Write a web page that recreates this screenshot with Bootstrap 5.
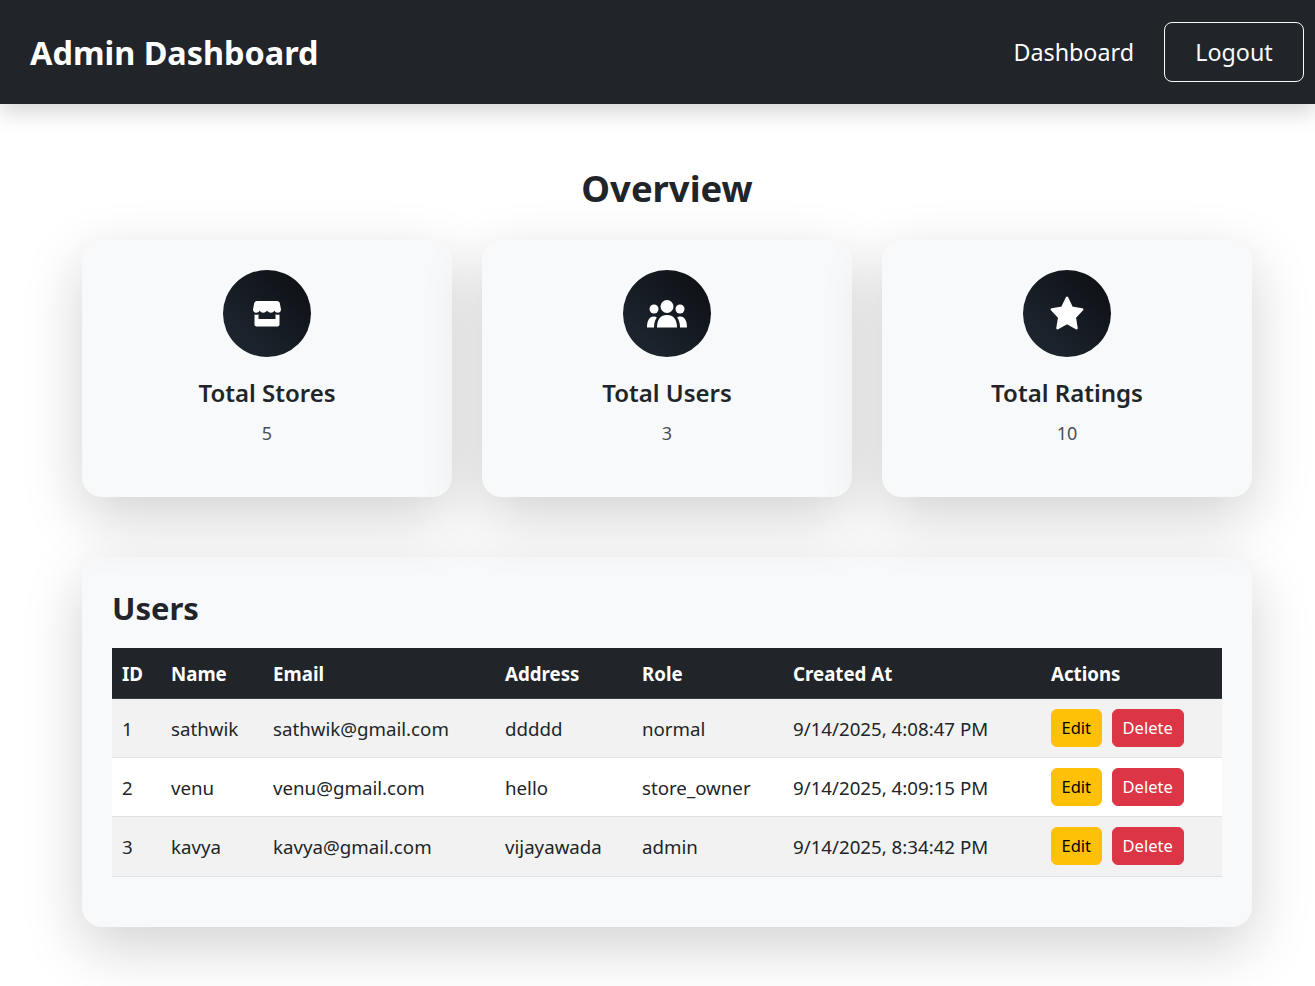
<!DOCTYPE html>
<html lang="en">
<head>
  <meta charset="UTF-8">
  <meta name="viewport" content="width=device-width, initial-scale=1.0">
  <title>Admin Dashboard</title>
  <link href="https://cdn.jsdelivr.net/npm/bootstrap@5.3.3/dist/css/bootstrap.min.css" rel="stylesheet">
  <style>
    body {
      font-family: "Noto Sans", "Open Sans", sans-serif;
      background: #fff;
      color: #212529;
    }
    .top-bar {
      height: 104px;
      padding: 0 11px 0 30px;
      box-shadow: 0 10px 20px rgba(0, 0, 0, 0.15);
    }
    .top-bar .navbar-brand {
      font-size: 32.4px;
      font-weight: 700;
      margin: 0;
      padding: 1px 0 0;
    }
    .top-link {
      font-size: 23.3px;
      color: #fff;
      text-decoration: none;
      margin-right: 30px;
      padding-top: 1px;
    }
    .logout-btn {
      font-size: 23.3px;
      width: 140px;
      height: 60px;
      border-radius: 8px;
      padding: 0;
    }
    .main-wrap {
      width: 1170px;
      margin-left: 82px;
      padding-bottom: 59px;
    }
    .page-title {
      font-size: 36.4px;
      font-weight: 700;
      line-height: 43px;
      margin: 63px 0 30px;
      text-align: center;
    }
    .stat-row {
      gap: 30px;
    }
    .stat-box {
      flex: 1 1 0;
      height: 257px;
      padding-top: 30px;
      background: #f8f9fa;
      border-radius: 20px;
      box-shadow: 0 20px 60px rgba(0, 0, 0, 0.18);
      text-align: center;
    }
    .stat-icon {
      width: 88px;
      height: 87px;
      border-radius: 50%;
      background: linear-gradient(45deg, #1f2933, #0d0f13);
      margin: 0 auto 22px;
    }
    .stat-box h3 {
      font-size: 24px;
      font-weight: 600;
      line-height: 1.2;
      margin: 0 0 12px;
    }
    .stat-box p {
      font-size: 18px;
      color: #495057;
      margin: 0;
    }
    .users-box {
      height: 370px;
      margin-top: 60px;
      padding: 30px;
      background: #f8f9fa;
      border-radius: 20px;
      box-shadow: 0 20px 60px rgba(0, 0, 0, 0.18);
    }
    .users-box h2 {
      font-size: 31px;
      font-weight: 700;
      line-height: 38px;
      margin: 2px 0 21px;
    }
    .users-table {
      table-layout: fixed;
      font-size: 18.7px;
      margin: 0;
      --bs-table-bg: #fff;
      --bs-table-striped-bg: #f2f2f2;
    }
    .users-table th {
      font-weight: 700;
      height: 50px;
      padding: 2px 10px 0;
      vertical-align: middle;
    }
    .users-table td {
      height: 59px;
      padding: 3px 10px 0;
      vertical-align: middle;
    }
    .users-table tr:last-child td {
      height: 60px;
    }
    .users-table td.action-cell {
      padding-top: 0;
    }
    .col-id { width: 49px; }
    .col-name { width: 102px; }
    .col-email { width: 232px; }
    .col-address { width: 137px; }
    .col-role { width: 151px; }
    .col-created { width: 258px; }
    .col-actions { width: 181px; }
    .users-table .btn {
      font-size: 16.5px;
      line-height: 24px;
      padding: 6px 10px;
      border-radius: 6px;
    }
    .users-table .btn-warning {
      padding: 6px 9.5px;
      margin-right: 10px;
    }
  </style>
</head>
<body>
  <nav class="navbar navbar-dark bg-dark top-bar d-flex justify-content-between align-items-center">
    <a class="navbar-brand" href="#">Admin Dashboard</a>
    <div class="d-flex align-items-center">
      <a class="top-link" href="#">Dashboard</a>
      <button class="btn btn-outline-light logout-btn">Logout</button>
    </div>
  </nav>

  <div class="main-wrap">
    <h2 class="page-title">Overview</h2>

    <div class="d-flex stat-row">
      <div class="stat-box">
        <div class="stat-icon d-flex align-items-center justify-content-center">
          <svg width="30" height="30" viewBox="0 0 30 30" fill="#fff">
            <path d="M5 2h20c1.500 0 2.500 1 2.800 2.200l1.200 6.300c0 2-1.500 3.300-3.200 3.300-1.500 0-2.600-.7-3.400-2-.8 1.300-2 2-3.500 2s-2.800-.7-3.900-2c-1 1.300-2.300 2-3.800 2s-2.700-.7-3.500-2c-.8 1.300-2 2-3.400 2C2.500 13.800 1 12.500 1 10.500l1.200-6.300C2.500 3 3.500 2 5 2z"/>
            <path d="M2.500 15.500c1.300.4 2.700.3 4-.3v4.800h17v-4.800c1.300.6 2.700.7 4 .3v10c0 1.300-1 2-2 2h-21c-1 0-2-.7-2-2z"/>
          </svg>
        </div>
        <h3>Total Stores</h3>
        <p>5</p>
      </div>
      <div class="stat-box">
        <div class="stat-icon d-flex align-items-center justify-content-center">
          <svg width="40" height="30" viewBox="0 0 40 30" fill="#fff">
            <circle cx="20" cy="7.500" r="6.500"/>
            <circle cx="7" cy="10" r="4.500"/>
            <circle cx="33" cy="10" r="4.500"/>
            <path d="M10 28.500c0-8 3.500-12.500 10-12.500s10 4.500 10 12.500z"/>
            <path d="M0 28.500c0-7 2.500-11 6.500-11 1.500 0 2.500.3 3.300 1-1.800 2.500-2.800 6-2.800 10z"/>
            <path d="M40 28.500c0-7-2.500-11-6.500-11-1.500 0-2.500.3-3.300 1 1.800 2.500 2.800 6 2.800 10z"/>
          </svg>
        </div>
        <h3>Total Users</h3>
        <p>3</p>
      </div>
      <div class="stat-box">
        <div class="stat-icon d-flex align-items-center justify-content-center">
          <svg width="34" height="36" viewBox="0 0 34 36" fill="#fff" stroke="#fff" stroke-width="2.500" stroke-linejoin="round">
            <path d="M17 1.800l4.800 10 10.400 1.700-7.500 7.800 1.800 10.900-9.500-5.300-9.500 5.300 1.800-10.900-7.500-7.800 10.400-1.700z"/>
          </svg>
        </div>
        <h3>Total Ratings</h3>
        <p>10</p>
      </div>
    </div>

    <div class="users-box">
      <h2>Users</h2>
      <table class="table table-striped users-table">
        <thead class="table-dark">
          <tr>
            <th class="col-id">ID</th>
            <th class="col-name">Name</th>
            <th class="col-email">Email</th>
            <th class="col-address">Address</th>
            <th class="col-role">Role</th>
            <th class="col-created">Created At</th>
            <th class="col-actions">Actions</th>
          </tr>
        </thead>
        <tbody>
          <tr>
            <td>1</td>
            <td>sathwik</td>
            <td>sathwik@gmail.com</td>
            <td>ddddd</td>
            <td>normal</td>
            <td>9/14/2025, 4:08:47 PM</td>
            <td class="action-cell"><button class="btn btn-warning">Edit</button><button class="btn btn-danger">Delete</button></td>
          </tr>
          <tr>
            <td>2</td>
            <td>venu</td>
            <td>venu@gmail.com</td>
            <td>hello</td>
            <td>store_owner</td>
            <td>9/14/2025, 4:09:15 PM</td>
            <td class="action-cell"><button class="btn btn-warning">Edit</button><button class="btn btn-danger">Delete</button></td>
          </tr>
          <tr>
            <td>3</td>
            <td>kavya</td>
            <td>kavya@gmail.com</td>
            <td>vijayawada</td>
            <td>admin</td>
            <td>9/14/2025, 8:34:42 PM</td>
            <td class="action-cell"><button class="btn btn-warning">Edit</button><button class="btn btn-danger">Delete</button></td>
          </tr>
        </tbody>
      </table>
    </div>
  </div>
</body>
</html>
